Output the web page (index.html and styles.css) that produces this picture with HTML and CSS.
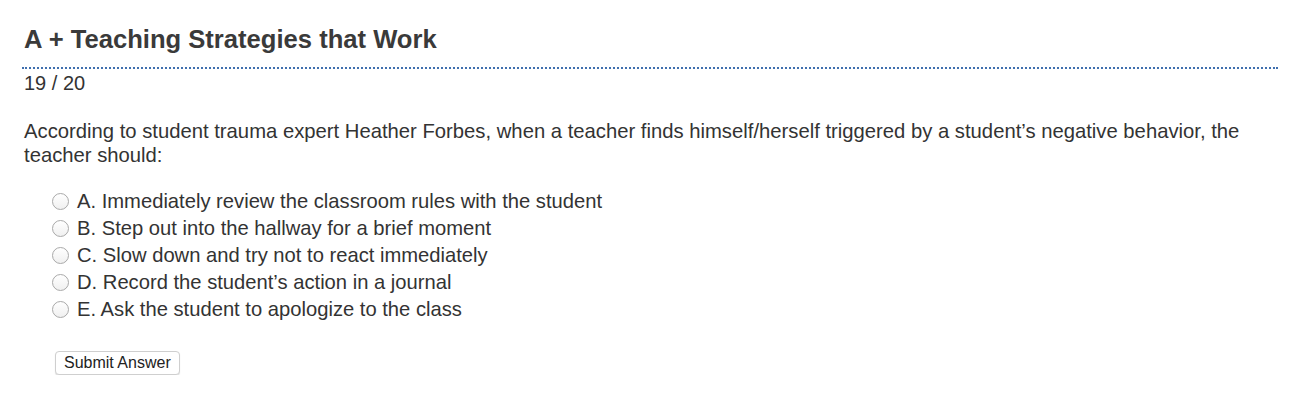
FILE: index.html
```html
<!DOCTYPE html>
<html lang="en">

<head>
    <meta charset="UTF-8">
    <title>A + Teaching Strategies that Work</title>
    <link rel="stylesheet" href="styles.css">
</head>

<body>
    <div class="quiz">
        <h1 class="quiz-title">A + Teaching Strategies that Work</h1>
        <div class="quiz-progress">19 / 20</div>
        <p class="question">According to student trauma expert Heather Forbes, when a teacher finds himself/herself triggered by a student’s negative behavior, the teacher should:</p>
        <form class="answers">
            <label class="answer"><span class="radio"></span>A. Immediately review the classroom rules with the student</label>
            <label class="answer"><span class="radio"></span>B. Step out into the hallway for a brief moment</label>
            <label class="answer"><span class="radio"></span>C. Slow down and try not to react immediately</label>
            <label class="answer"><span class="radio"></span>D. Record the student’s action in a journal</label>
            <label class="answer"><span class="radio"></span>E. Ask the student to apologize to the class</label>
            <button type="button" class="submit">Submit Answer</button>
        </form>
    </div>
</body>

</html>
```

FILE: styles.css
```css
body {
    margin: 0;
    background: #ffffff;
    color: #333333;
    font-family: "Liberation Sans", Arial, sans-serif;
}

.quiz {
    padding: 24px 22px 0 22px;
}

.quiz-title {
    margin: 0;
    padding: 0 0 13px 2px;
    font-size: 25.6px;
    line-height: 30px;
    font-weight: bold;
    color: #3a3a3a;
    border-bottom: 2px dotted #3f6fae;
}

.quiz-progress {
    padding: 2px 0 0 2px;
    font-size: 20px;
    line-height: 24px;
}

.question {
    margin: 24px 0 0 2px;
    font-size: 20.25px;
    line-height: 24px;
}

.answers {
    margin-top: 21px;
    padding-left: 30px;
}

.answer {
    display: flex;
    align-items: center;
    height: 27px;
    font-size: 20.2px;
}

.radio {
    width: 17px;
    height: 17px;
    margin-right: 8px;
    border: 1px solid #a9a9a9;
    border-radius: 50%;
    background: linear-gradient(#ffffff, #f0f0f0);
    box-sizing: border-box;
}

.submit {
    margin: 28px 0 0 3px;
    padding: 2px 8px;
    font-family: "Liberation Sans", Arial, sans-serif;
    font-size: 16px;
    line-height: 18px;
    color: #222222;
    background: #ffffff;
    border: 1px solid #cfcfcf;
    border-radius: 4px;
    box-shadow: 0 1px 1px rgba(0, 0, 0, 0.12);
}
```
